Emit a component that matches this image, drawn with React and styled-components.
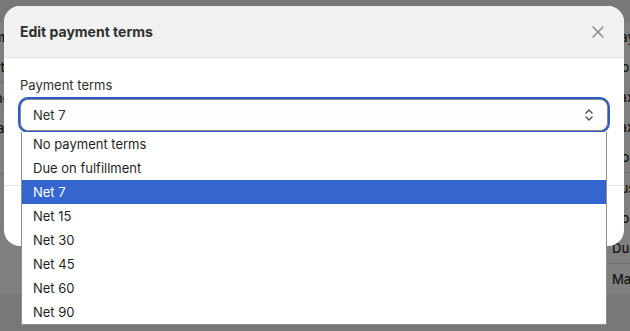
import styled, { createGlobalStyle } from "styled-components";

const GlobalStyle = createGlobalStyle`
  html, body {
    margin: 0;
    padding: 0;
    width: 630px;
    height: 331px;
    overflow: hidden;
    font-family: Inter, "Noto Sans", sans-serif;
    color: #303030;
  }
`;

const options = [
  "No payment terms",
  "Due on fulfillment",
  "Net 7",
  "Net 15",
  "Net 30",
  "Net 45",
  "Net 60",
  "Net 90",
];

const Screen = styled.div`
  position: relative;
  width: 630px;
  height: 331px;
  overflow: hidden;
  background: #f1f1f1;
`;

const Page = styled.div`
  display: grid;
  grid-template-columns: 644px 200px;
  gap: 12px;
  padding: 22px 0 0 0;
  margin-left: -60px;
  width: 856px;
  font-size: 13px;
`;

const Card = styled.div`
  background: #ffffff;
  border-radius: 12px;
  display: flex;
  flex-direction: column;
`;

const CardRow = styled.div`
  padding: 6px 16px;
  line-height: 18px;
  white-space: nowrap;
  border-bottom: ${(p) => (p.$line ? "1px solid #dcdcdc" : "none")};
  font-weight: ${(p) => (p.$bold ? 650 : 450)};
`;

const Backdrop = styled.div`
  position: absolute;
  inset: 0;
  background: rgba(0, 0, 0, 0.5);
`;

const Modal = styled.div`
  position: absolute;
  left: 4px;
  top: 6px;
  width: 620px;
  height: 240px;
  background: #ffffff;
  border-radius: 16px;
  overflow: hidden;
  display: flex;
  flex-direction: column;
`;

const Header = styled.div`
  height: 52px;
  flex-shrink: 0;
  box-sizing: border-box;
  background: #f1f1f1;
  border-bottom: 1px solid #e3e3e3;
  display: flex;
  align-items: center;
  justify-content: space-between;
  padding: 0 16px;
`;

const Title = styled.h2`
  margin: 0;
  font-size: 14px;
  font-weight: 650;
  color: #303030;
`;

const Close = styled.button`
  border: 0;
  background: none;
  padding: 0;
  width: 20px;
  height: 20px;
  display: flex;
  align-items: center;
  justify-content: center;
  color: #8a8a8a;
`;

const Body = styled.div`
  padding: 17px 16px 0;
  height: 128px;
  box-sizing: border-box;
  border-bottom: 1px solid #e3e3e3;
  display: flex;
  flex-direction: column;
  gap: 4px;
`;

const Label = styled.label`
  font-size: 13px;
  line-height: 20px;
  color: #303030;
`;

const Field = styled.div`
  height: 32px;
  box-sizing: border-box;
  border: 1px solid #8a8a8a;
  border-radius: 8px;
  background: #fdfdfd;
  box-shadow: 0 0 0 2px #2c5bc6;
  display: flex;
  align-items: center;
  justify-content: space-between;
  padding: 0 12px;
  font-size: 13px;
`;

const List = styled.ul`
  position: absolute;
  left: 21px;
  top: 132px;
  width: 586px;
  margin: 0;
  padding: 0;
  list-style: none;
  background: #ffffff;
  border: 1px solid #8f8f8f;
  border-top: 0;
  box-sizing: border-box;
`;

const Option = styled.li`
  height: 24px;
  line-height: 24px;
  padding-left: 11px;
  font-size: 13px;
  color: ${(p) => (p.$active ? "#ffffff" : "#1f1f1f")};
  background: ${(p) => (p.$active ? "#3565cf" : "transparent")};
`;

const App = () => {
  return (
    <Screen>
      <GlobalStyle />
      <Page>
        <Card>
          <CardRow $bold>Customer</CardRow>
          <CardRow $line>Contact information</CardRow>
          <CardRow>Shipping address</CardRow>
          <CardRow>Billing address</CardRow>
          <CardRow $line>Notes</CardRow>
          <CardRow>Email</CardRow>
        </Card>
        <Card>
          <CardRow>Payment</CardRow>
          <CardRow>Do not</CardRow>
          <CardRow>Tax</CardRow>
          <CardRow>Tax exempt</CardRow>
          <CardRow $line>Do not</CardRow>
          <CardRow>Business</CardRow>
          <CardRow>Do not</CardRow>
          <CardRow $line>Due</CardRow>
          <CardRow>Mark as paid</CardRow>
        </Card>
      </Page>
      <Backdrop />
      <Modal>
        <Header>
          <Title>Edit payment terms</Title>
          <Close aria-label="Close">
            <svg width="14" height="14" viewBox="0 0 14 14" fill="none">
              <path
                d="M2 2L12 12M12 2L2 12"
                stroke="currentColor"
                strokeWidth="1.5"
                strokeLinecap="round"
              />
            </svg>
          </Close>
        </Header>
        <Body>
          <Label>Payment terms</Label>
          <Field>
            <span>Net 7</span>
            <svg width="12" height="16" viewBox="0 0 12 16" fill="none">
              <path
                d="M3 6L6 3L9 6M3 10L6 13L9 10"
                stroke="#4a4a4a"
                strokeWidth="1.4"
                strokeLinecap="round"
                strokeLinejoin="round"
              />
            </svg>
          </Field>
        </Body>
      </Modal>
      <List>
        {options.map((o) => (
          <Option key={o} $active={o === "Net 7"}>
            {o}
          </Option>
        ))}
      </List>
    </Screen>
  );
};

export default App;
